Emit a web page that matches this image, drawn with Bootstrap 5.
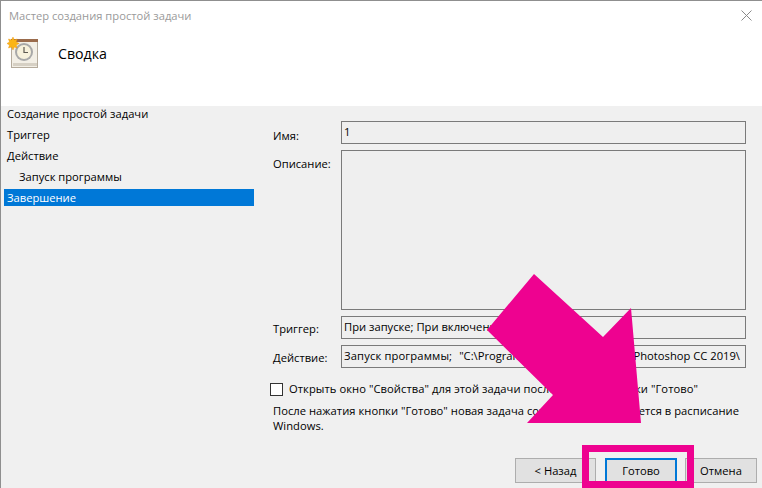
<!DOCTYPE html>
<html lang="ru">
<head>
<meta charset="utf-8">
<title>Мастер создания простой задачи</title>
<link href="https://cdn.jsdelivr.net/npm/bootstrap@5.3.0/dist/css/bootstrap.min.css" rel="stylesheet">
<style>
html,body{height:488px;overflow:hidden;margin:0}
body{background:#8f8f8f;font-family:"Open Sans","Noto Sans",sans-serif;font-size:11.2px;color:#000;line-height:16px}
.wiz{position:relative;width:761px;height:487px;margin-top:1px;margin-left:1px;background:#f0f0f0;overflow:hidden}
.wiz-head{height:105px;background:#fff;flex:none}
.wiz-title{height:30px;padding:7px 8px;color:#9a9a9a;line-height:16px}
.wiz-close{position:absolute;left:740px;top:9px}
.wiz-sub{padding:6px 5px 0;gap:20px;align-items:flex-start}
.wiz-sub h1{font-size:14.2px;line-height:20px;margin:7px 0 0 -1px;font-weight:400;font-family:inherit}
.wiz-body{flex:1;min-height:0}
.side{width:253px;flex:none;padding:0 0 0 3px}
.side .list-group{--bs-list-group-border-radius:0}
.side-item{height:21px;line-height:15px;padding:0 3px;margin:0;background:transparent;border:0;color:#000;font-size:11.2px}
.side-item.sub{padding-left:15px}
.side-item.active{background:#0078d7;color:#fff;height:17px;line-height:17px;margin-top:0;border:0}
.pane{width:500px;flex:none;padding:15px 0 0 19px}
.frow{display:flex;margin-bottom:6px}
.frow label{width:68px;flex:none;padding-top:6px;margin:0}
.frow label.lo{padding-top:7px}
.frow label.hi{padding-top:5px}
.fbox{width:405px;flex:none;height:23px;background:#efefef;border:1px solid #7a7a7a;border-radius:0;padding:1px 2px;font-size:11.2px;line-height:18px;color:#000;box-shadow:none;white-space:nowrap;overflow:hidden}
.fbox.tall{height:160px}
.fkind{letter-spacing:.15px}
.fpath{margin-left:4px}
.fprod{margin-left:6px}
.fcheck{margin:14px 0 0 -3px;padding:0;min-height:0;display:flex;align-items:center;gap:6px;height:14px}
.fcheck .form-check-input{width:13px;height:13px;margin:1px 0 0;float:none;border:1px solid #333;border-radius:0;background-color:#fff}
.fcheck label{margin:0;white-space:nowrap;letter-spacing:.06px}
.fnote{margin:7px 0 0;line-height:15px;width:472px;letter-spacing:.03px}
.foot{position:absolute;left:514px;top:457px;gap:8px}
.wbtn{width:72px;height:25px;padding:0;border-radius:0;background:#e1e1e1;border:1px solid #adadad;font-size:11.2px;line-height:22px;color:#000}
.wbtn.back{width:81px;margin-right:1px}
.wbtn.main{border:2px solid #0078d7}
.ann{position:absolute;left:-1px;top:-1px;width:762px;height:488px;pointer-events:none}
</style>
</head>
<body>
<div class="wiz d-flex flex-column">
  <div class="wiz-head">
    <div class="wiz-title">Мастер создания простой задачи</div>
    <svg class="wiz-close" width="11" height="11" viewBox="0 0 11 11"><path d="M.5.5l10 10M10.500.5l-10 10" stroke="#8a8a8a" fill="none"/></svg>
    <div class="wiz-sub d-flex">
      <svg width="33" height="32" viewBox="0 0 33 32">
        <rect x="5.500" y="2.500" width="26" height="28" fill="#f3efe6" stroke="#b5ab9c"/>
        <rect x="5" y="2" width="27" height="3" fill="#9a6b4c"/>
        <rect x="7" y="26" width="24" height="3" fill="#d6d0c4"/>
        <circle cx="18" cy="15" r="9" fill="#a8a8a8"/>
        <circle cx="18" cy="15" r="7" fill="#f7f1dc"/>
        <path d="M18 10v5.500h4" stroke="#5e5a52" stroke-width="1.200" fill="none"/>
        <path d="M7 0l1.200 3 3-1-1 3 3 1.500-3 1.500 1 3-3-1-1.200 3-1.500-3-3 1 1-3-2.500-1.500 2.500-1.500-1-3 3 1z" fill="#fbb516" stroke="#e88d06" stroke-width=".4"/>
      </svg>
      <h1>Сводка</h1>
    </div>
  </div>
  <div class="wiz-body d-flex">
    <div class="side">
      <div class="list-group">
        <div class="list-group-item side-item">Создание простой задачи</div>
        <div class="list-group-item side-item">Триггер</div>
        <div class="list-group-item side-item">Действие</div>
        <div class="list-group-item side-item sub">Запуск программы</div>
        <div class="list-group-item side-item active">Завершение</div>
      </div>
    </div>
    <div class="pane">
      <div class="frow"><label class="lo">Имя:</label><div class="form-control fbox">1</div></div>
      <div class="frow"><label>Описание:</label><div class="form-control fbox tall"></div></div>
      <div class="frow"><label class="hi">Триггер:</label><div class="form-control fbox">При запуске; При включении компьютера</div></div>
      <div class="frow"><label class="hi">Действие:</label><div class="form-control fbox"><span class="fkind">Запуск программы;</span> <span class="fpath">"C:\Program Files\Adobe\Adobe</span> <span class="fprod">Photoshop CC 2019\</span></div></div>
      <div class="form-check fcheck"><input class="form-check-input" type="checkbox" id="c1"><label class="form-check-label" for="c1">Открыть окно "Свойства" для этой задачи после нажатия кнопки "Готово"</label></div>
      <p class="fnote">После нажатия кнопки "Готово" новая задача создается и добавляется в расписание Windows.</p>
    </div>
  </div>
  <div class="foot d-flex">
    <button class="btn wbtn back">&lt; Назад</button>
    <button class="btn wbtn main">Готово</button>
    <button class="btn wbtn">Отмена</button>
  </div>
  <svg class="ann" viewBox="0 0 762 488">
    <polygon points="534,274 603,337 631,308 641,423 527,423 553,395 487,330" fill="#ee0290"/>
    <rect x="585.500" y="448.500" width="105" height="36" fill="none" stroke="#ee0290" stroke-width="7"/>
  </svg>
</div>
</body>
</html>
